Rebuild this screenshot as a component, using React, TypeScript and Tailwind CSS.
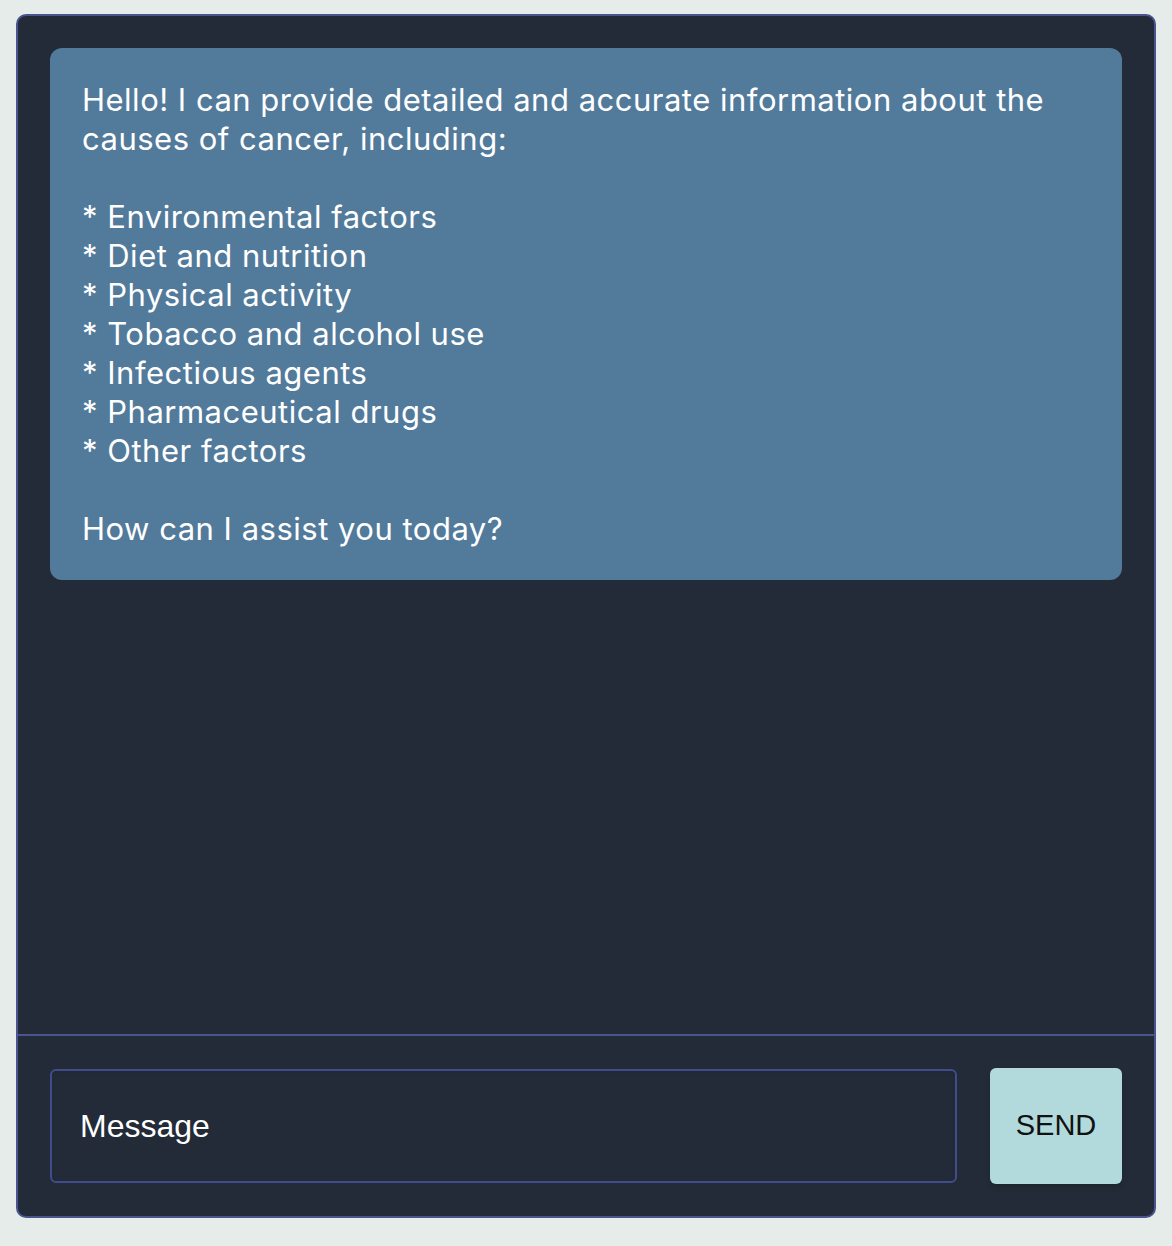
import React, { useState } from 'react';

const greeting = `Hello! I can provide detailed and accurate information about the causes of cancer, including:

* Environmental factors
* Diet and nutrition
* Physical activity
* Tobacco and alcohol use
* Infectious agents
* Pharmaceutical drugs
* Other factors

How can I assist you today?`;

const App: React.FC = () => {
    const [message, setMessage] = useState('');

    return (
        <div className="min-h-[1246px] bg-[#e6ecea] px-4 pt-[14px] pb-[28px] flex">
            <section className="flex-1 flex flex-col bg-[#222b37] border-2 border-[#4a5590] rounded-[10px] overflow-hidden">
                <div className="flex-1 px-8 pt-8">
                    <div
                        className="bg-[#527a9b] rounded-xl px-8 py-8 text-white text-[31px] tracking-[0.5px] leading-[39px] whitespace-pre-wrap"
                        style={{ fontFamily: 'Inter, "Noto Sans", sans-serif' }}
                    >
                        {greeting}
                    </div>
                </div>
                <div className="border-t-2 border-[#4a5590] px-8 pt-[32px] pb-[32px] flex items-center gap-[33px]">
                    <input
                        value={message}
                        onChange={(e) => setMessage(e.target.value)}
                        placeholder="Message"
                        className="flex-1 h-[114px] bg-transparent border-2 border-[#414c8a] rounded-md pl-[28px] pr-7 text-[32px] text-white placeholder:text-white outline-none shadow-inner"
                        style={{ fontFamily: '"Liberation Sans", Arial, sans-serif' }}
                    />
                    <button
                        className="w-[132px] h-[116px] bg-[#b2dadc] rounded-md text-[29px] text-[#111] shadow-md"
                        style={{ fontFamily: '"Liberation Sans", Arial, sans-serif' }}
                    >
                        SEND
                    </button>
                </div>
            </section>
        </div>
    );
};

export default App;
